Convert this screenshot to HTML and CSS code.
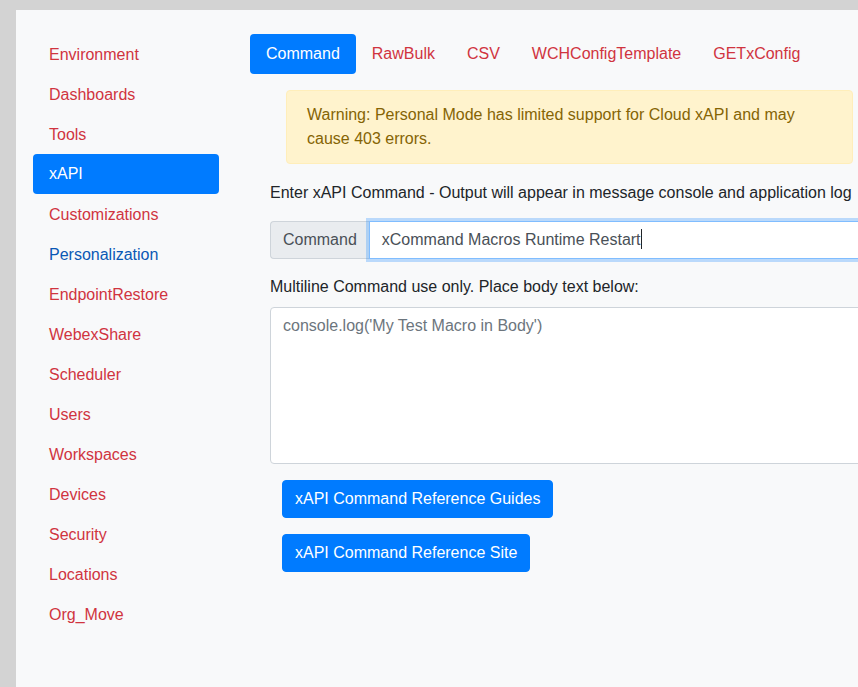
FILE: index.html
```html
<!DOCTYPE html>
<html lang="en">
<head>
<meta charset="utf-8">
<title>xAPI</title>
<link rel="stylesheet" href="styles.css">
</head>
<body>
<div class="panel">
  <nav class="sidebar">
    <a class="side-link">Environment</a>
    <a class="side-link">Dashboards</a>
    <a class="side-link">Tools</a>
    <a class="side-link active">xAPI</a>
    <a class="side-link">Customizations</a>
    <a class="side-link blue">Personalization</a>
    <a class="side-link">EndpointRestore</a>
    <a class="side-link">WebexShare</a>
    <a class="side-link">Scheduler</a>
    <a class="side-link">Users</a>
    <a class="side-link">Workspaces</a>
    <a class="side-link">Devices</a>
    <a class="side-link">Security</a>
    <a class="side-link">Locations</a>
    <a class="side-link">Org_Move</a>
  </nav>
  <main class="main">
    <div class="tabs">
      <a class="tab active">Command</a>
      <a class="tab">RawBulk</a>
      <a class="tab">CSV</a>
      <a class="tab">WCHConfigTemplate</a>
      <a class="tab">GETxConfig</a>
    </div>
    <div class="alert">Warning: Personal Mode has limited support for Cloud xAPI and may cause 403 errors.</div>
    <div class="form">
      <p class="label first">Enter xAPI Command - Output will appear in message console and application log</p>
      <div class="input-group">
        <span class="prepend">Command</span>
        <div class="input focus" role="textbox">xCommand Macros Runtime Restart<span class="caret"></span></div>
      </div>
      <p class="label second">Multiline Command use only. Place body text below:</p>
      <div class="textarea" role="textbox">console.log('My Test Macro in Body')</div>
      <div class="buttons">
        <a class="btn">xAPI Command Reference Guides</a>
        <a class="btn">xAPI Command Reference Site</a>
      </div>
    </div>
  </main>
</div>
</body>
</html>
```

FILE: styles.css
```css
html, body {
  margin: 0;
  padding: 0;
  height: 100%;
  overflow: hidden;
}
body {
  background: #d3d3d3;
  font-family: "Liberation Sans", Arial, sans-serif;
  font-size: 16px;
  line-height: 24px;
  padding: 10px 0 0 16px;
  box-sizing: border-box;
}
.panel {
  display: flex;
  background: #f8f9fa;
  width: calc(100vw - 16px);
  height: calc(100vh - 10px);
  overflow: hidden;
}
.sidebar {
  display: flex;
  flex-direction: column;
  width: 186px;
  padding: 25px 0 0 17px;
  flex-shrink: 0;
}
.side-link {
  display: block;
  padding: 8px 16px;
  color: #d0343f;
  border-radius: 4px;
  cursor: pointer;
}
.side-link.active {
  background: #007bff;
  color: #fff;
  margin: -1px 0 1px;
}
.side-link.blue {
  color: #0a58b5;
}
.main {
  margin-left: 31px;
  padding-top: 24px;
  flex: 1;
  min-width: 0;
}
.tabs {
  display: flex;
}
.tab {
  padding: 8px 16px;
  color: #d0343f;
  border-radius: 4px;
  cursor: pointer;
  white-space: nowrap;
}
.tab.active {
  background: #007bff;
  color: #fff;
}
.alert {
  margin: 16px 0 0 36px;
  width: 525px;
  padding: 12px 20px;
  background: #fff3cd;
  border: 1px solid #ffeeba;
  border-radius: 4px;
  color: #856404;
}
.form {
  margin-left: 20px;
}
.label {
  margin: 0;
  color: #212529;
  white-space: nowrap;
}
.label.first {
  margin-top: 17px;
}
.label.second {
  margin-top: 16px;
}
.input-group {
  display: flex;
  margin-top: 16px;
  width: 700px;
}
.prepend {
  padding: 6px 12px;
  background: #e9ecef;
  border: 1px solid #ced4da;
  border-right: none;
  border-radius: 4px 0 0 4px;
  color: #495057;
}
.input {
  flex: 1;
  padding: 6px 12px;
  background: #fff;
  border: 1px solid #80bdff;
  color: #495057;
  box-shadow: 0 0 0 3px rgba(0, 123, 255, 0.25);
}
.caret {
  display: inline-block;
  width: 1px;
  height: 20px;
  background: #212529;
  vertical-align: -4px;
}
.textarea {
  margin-top: 8px;
  width: 700px;
  height: 143px;
  padding: 6px 12px;
  background: #fff;
  border: 1px solid #ced4da;
  border-radius: 4px;
  color: #6c757d;
}
.buttons {
  display: flex;
  flex-direction: column;
  align-items: flex-start;
  gap: 16px;
  margin: 16px 0 0 12px;
}
.btn {
  padding: 6px 12px;
  border: 1px solid #007bff;
  background: #007bff;
  color: #fff;
  border-radius: 4px;
  cursor: pointer;
  white-space: nowrap;
}
```
